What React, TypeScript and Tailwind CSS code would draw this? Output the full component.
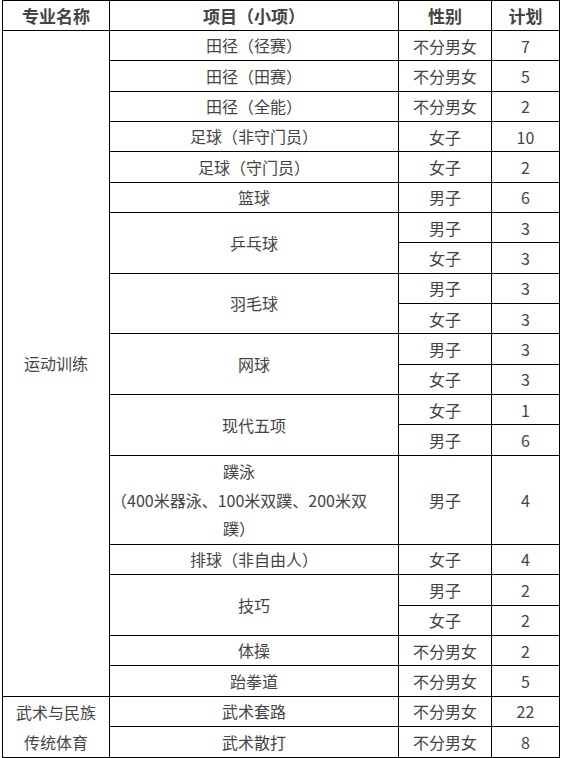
type Row = {
  major?: { lines: string[]; span: number };
  item?: { lines: string[]; span: number };
  gender: string;
  plan: string;
  tall?: boolean;
};

const rows: Row[] = [
  { major: { lines: ["运动训练"], span: 20 }, item: { lines: ["田径（径赛）"], span: 1 }, gender: "不分男女", plan: "7" },
  { item: { lines: ["田径（田赛）"], span: 1 }, gender: "不分男女", plan: "5" },
  { item: { lines: ["田径（全能）"], span: 1 }, gender: "不分男女", plan: "2" },
  { item: { lines: ["足球（非守门员）"], span: 1 }, gender: "女子", plan: "10" },
  { item: { lines: ["足球（守门员）"], span: 1 }, gender: "女子", plan: "2" },
  { item: { lines: ["篮球"], span: 1 }, gender: "男子", plan: "6" },
  { item: { lines: ["乒乓球"], span: 2 }, gender: "男子", plan: "3" },
  { gender: "女子", plan: "3" },
  { item: { lines: ["羽毛球"], span: 2 }, gender: "男子", plan: "3" },
  { gender: "女子", plan: "3" },
  { item: { lines: ["网球"], span: 2 }, gender: "男子", plan: "3" },
  { gender: "女子", plan: "3" },
  { item: { lines: ["现代五项"], span: 2 }, gender: "女子", plan: "1" },
  { gender: "男子", plan: "6" },
  {
    item: { lines: ["蹼泳", "（400米器泳、100米双蹼、200米双", "蹼）"], span: 1 },
    gender: "男子",
    plan: "4",
    tall: true,
  },
  { item: { lines: ["排球（非自由人）"], span: 1 }, gender: "女子", plan: "4" },
  { item: { lines: ["技巧"], span: 2 }, gender: "男子", plan: "2" },
  { gender: "女子", plan: "2" },
  { item: { lines: ["体操"], span: 1 }, gender: "不分男女", plan: "2" },
  { item: { lines: ["跆拳道"], span: 1 }, gender: "不分男女", plan: "5" },
  { major: { lines: ["武术与民族", "传统体育"], span: 2 }, item: { lines: ["武术套路"], span: 1 }, gender: "不分男女", plan: "22" },
  { item: { lines: ["武术散打"], span: 1 }, gender: "不分男女", plan: "8" },
];

const cell = "border border-black text-center align-middle p-0";

export default function App() {
  return (
    <div
      className="bg-white w-[561px] h-[758px] pl-[2px] text-[16px] text-[#444]"
      style={{ fontFamily: '"Noto Sans CJK SC", sans-serif' }}
    >
      <table className="border-collapse table-fixed w-[557px]">
        <colgroup>
          <col className="w-[107px]" />
          <col className="w-[289px]" />
          <col className="w-[93px]" />
          <col className="w-[68px]" />
        </colgroup>
        <thead>
          <tr className="h-[30px] font-bold text-[17px] text-[#444]">
            <th className={cell}>专业名称</th>
            <th className={cell}>项目（小项）</th>
            <th className={cell}>性别</th>
            <th className={cell}>计划</th>
          </tr>
        </thead>
        <tbody>
          {rows.map((r, i) => (
            <tr key={i} className={r.tall ? "h-[89px]" : "h-[30.35px]"}>
              {r.major && (
                <td className={`${cell} leading-[30px]`} rowSpan={r.major.span}>
                  {r.major.lines.map((l) => (
                    <div key={l}>{l}</div>
                  ))}
                </td>
              )}
              {r.item && (
                <td
                  className={`${cell} leading-[28.5px] ${r.tall ? "pr-[30px]" : ""}`}
                  rowSpan={r.item.span}
                >
                  {r.item.lines.map((l) => (
                    <div key={l} className="whitespace-nowrap">
                      {l}
                    </div>
                  ))}
                </td>
              )}
              <td className={cell}>{r.gender}</td>
              <td className={cell}>{r.plan}</td>
            </tr>
          ))}
        </tbody>
      </table>
    </div>
  );
}
